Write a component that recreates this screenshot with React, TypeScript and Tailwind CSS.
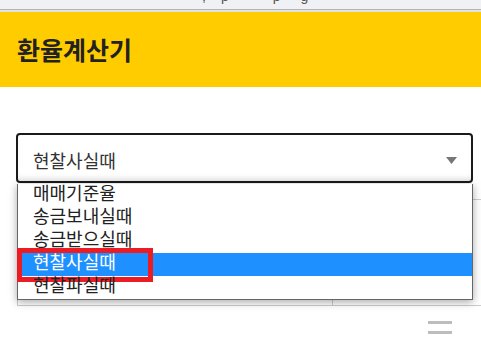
const OPTIONS = ["매매기준율", "송금보내실때", "송금받으실때", "현찰사실때", "현찰파실때"];
const SELECTED = 3;

const KR = { fontFamily: '"Noto Sans CJK KR", "Noto Sans", sans-serif' };

export default function App() {
  return (
    <div className="w-[481px] h-[346px] overflow-hidden bg-white text-[#222]" style={KR}>
      {/* browser chrome remnant */}
      <div className="h-[9px] bg-[#f0f1f4] overflow-hidden">
        <div
          className="flex text-[14px] leading-[14px] text-[#555] -translate-y-[11px]"
          style={{ fontFamily: '"Liberation Sans", sans-serif' }}
        >
          <span className="ml-[202px]">,</span>
          <span className="ml-[15px]">p</span>
          <span className="ml-[44px]">p</span>
          <span className="ml-[20px]">g</span>
        </div>
      </div>
      <div className="h-px bg-[#b4b4b4]" />
      <div className="h-[2px] bg-[#e2e2e2]" />

      {/* header */}
      <header className="h-[75px] bg-[#ffcc00] flex items-center pl-[17px]">
        <h1 className="text-[25px] font-bold leading-none text-[#222]">환율계산기</h1>
      </header>

      <main className="pt-[46px] pl-4">
        {/* select */}
        <div className="w-[457px] h-[50px] border-2 border-[#1a1a1a] rounded-[4px] flex items-center justify-between pl-[15px] pr-[14px] shadow-[inset_0_-6px_6px_-4px_rgba(0,0,0,0.12)]">
          <span className="text-[18px] text-[#333] leading-none pt-[3px]">현찰사실때</span>
          <svg width="11" height="7" viewBox="0 0 11 7" className="mt-[4px]">
            <path d="M0 0 H11 L5.5 7 Z" fill="#777" />
          </svg>
        </div>

        <div className="relative pt-[16px]">
          {/* table behind the dropdown */}
          <div className="ml-px w-[480px] h-[107px] border border-[#cccccc] grid grid-cols-[315px_1fr]">
            <div className="border-r border-[#cccccc]" />
            <div />
          </div>

          {/* open dropdown */}
          <ul className="absolute left-px top-px w-[456px] bg-white border border-t-0 border-[#666] shadow-[0_2px_8px_rgba(0,0,0,0.35)]">
            {OPTIONS.map((opt, i) => (
              <li
                key={opt}
                className={`relative h-[23px] pl-[15px] text-[18px] leading-[17px] ${
                  i === SELECTED ? "bg-[#1e90ff] text-white" : "text-[#222]"
                }`}
              >
                {opt}
                {i === SELECTED && (
                  <span className="absolute -left-[1px] -top-[5px] w-[136px] h-[34px] border-[5px] border-[#ec1c24]" />
                )}
              </li>
            ))}
          </ul>
        </div>

        {/* menu handle */}
        <div className="flex justify-end pr-[29px] pt-[15px]">
          <div className="flex flex-col gap-[7px]">
            <span className="block w-[24px] h-[3px] bg-[#bdbdbd]" />
            <span className="block w-[24px] h-[3px] bg-[#bdbdbd]" />
          </div>
        </div>
      </main>
    </div>
  );
}
